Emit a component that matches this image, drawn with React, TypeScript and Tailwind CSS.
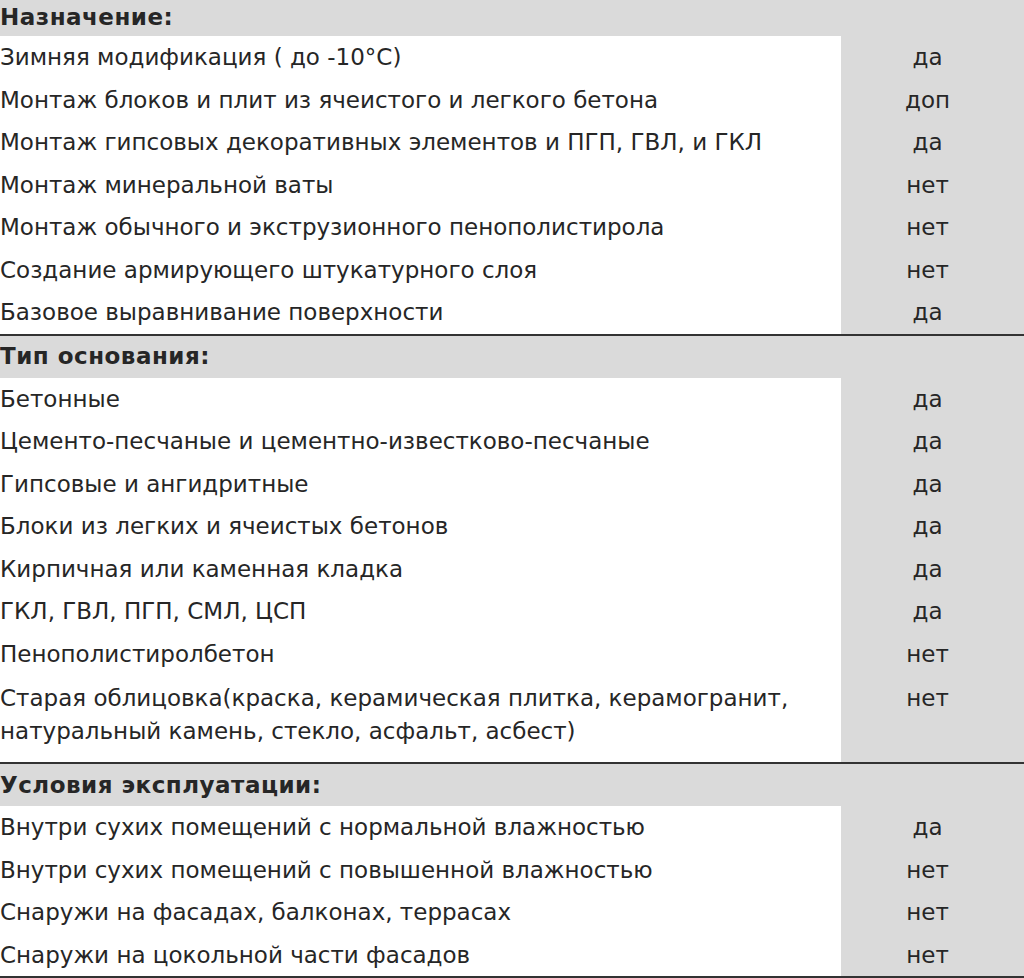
const sections = [
  {
    title: "Назначение:",
    first: true,
    rows: [
      ["Зимняя модификация ( до -10°C)", "да"],
      ["Монтаж блоков и плит из ячеистого и легкого бетона", "доп"],
      ["Монтаж гипсовых декоративных элементов и ПГП, ГВЛ, и ГКЛ", "да"],
      ["Монтаж минеральной ваты", "нет"],
      ["Монтаж обычного и экструзионного пенополистирола", "нет"],
      ["Создание армирующего штукатурного слоя", "нет"],
      ["Базовое выравнивание поверхности", "да"],
    ],
  },
  {
    title: "Тип основания:",
    rows: [
      ["Бетонные", "да"],
      ["Цементо-песчаные и цементно-известково-песчаные", "да"],
      ["Гипсовые и ангидритные", "да"],
      ["Блоки из легких и ячеистых бетонов", "да"],
      ["Кирпичная или каменная кладка", "да"],
      ["ГКЛ, ГВЛ, ПГП, СМЛ, ЦСП", "да"],
      ["Пенополистиролбетон", "нет"],
      ["Старая облицовка(краска, керамическая плитка, керамогранит,\nнатуральный камень, стекло, асфальт, асбест)", "нет"],
    ],
  },
  {
    title: "Условия эксплуатации:",
    rows: [
      ["Внутри сухих помещений с нормальной влажностью", "да"],
      ["Внутри сухих помещений с повышенной влажностью", "нет"],
      ["Снаружи на фасадах, балконах, террасах", "нет"],
      ["Снаружи на цокольной части фасадов", "нет"],
    ],
  },
];

function Row({ label, value }: { label: string; value: string }) {
  const multi = label.includes("\n");
  return (
    <div className="flex">
      <div
        className={
          multi
            ? "flex-1 bg-white whitespace-pre-line leading-[33px] pt-[7px] pb-[14px]"
            : "flex-1 bg-white h-[42.5px] flex items-center"
        }
      >
        {label}
      </div>
      <div
        className={
          multi
            ? "w-[183px] bg-[#dadada] text-center pr-[10px] leading-[33px] pt-[7px]"
            : "w-[183px] bg-[#dadada] text-center pr-[10px] h-[42.5px] flex items-center justify-center"
        }
      >
        {value}
      </div>
    </div>
  );
}

export default function App() {
  return (
    <div
      className="w-[1024px] h-[978px] overflow-hidden bg-[#dadada] text-[#262626] text-[23px]"
      style={{ fontFamily: '"DejaVu Sans", Verdana, sans-serif' }}
    >
      {sections.map((s) => (
        <div key={s.title} className="border-b-2 border-[#333]">
          <div
            className={
              s.first
                ? "h-[36px] flex items-center pb-[2px] font-bold tracking-[0.5px]"
                : "h-[42px] flex items-center font-bold tracking-[0.5px]"
            }
          >
            {s.title}
          </div>
          {s.rows.map((r) => (
            <Row key={r[0]} label={r[0]} value={r[1]} />
          ))}
        </div>
      ))}
    </div>
  );
}
